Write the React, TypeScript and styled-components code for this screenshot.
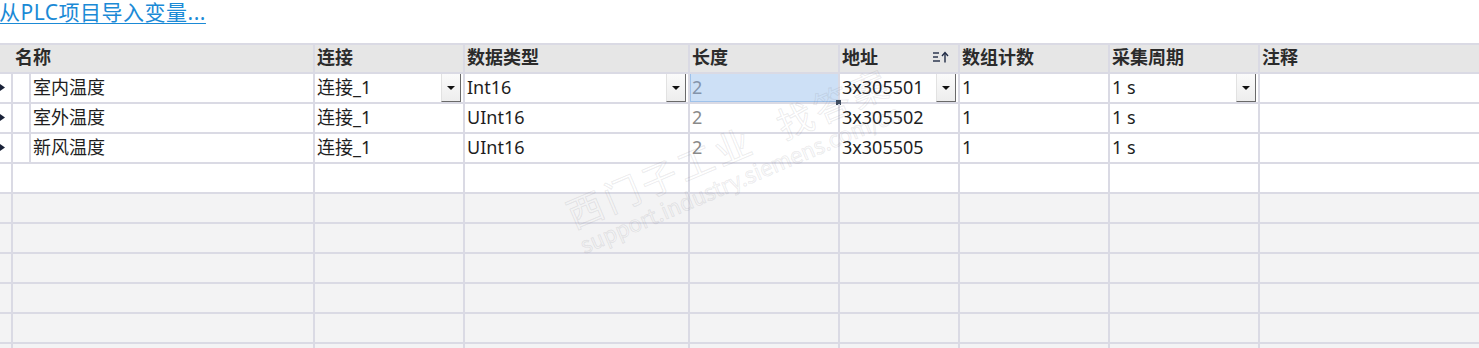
import { createGlobalStyle, styled } from "styled-components";

const GlobalStyle = createGlobalStyle`
  html, body {
    margin: 0;
    padding: 0;
    background: #ffffff;
    overflow: hidden;
  }
  body {
    font-family: "Noto Sans", "Noto Sans CJK SC", sans-serif;
  }
`;

const LINE = "#dadae4";

const Page = styled.div`
  position: relative;
  width: 1479px;
  height: 348px;
  overflow: hidden;
`;

const LinkBar = styled.div`
  height: 43px;
  display: flex;
  align-items: flex-start;
`;

const ImportLink = styled.a`
  margin-left: -1px;
  font-family: "Noto Sans", "Noto Sans CJK SC", sans-serif;
  font-size: 21px;
  letter-spacing: 0.5px;
  line-height: 24px;
  color: #1b8ad6;
  text-decoration: underline;
  text-underline-offset: 3px;
  text-decoration-thickness: 1px;
  cursor: pointer;
`;

const HeaderRow = styled.div`
  display: grid;
  grid-template-columns: 315px 150px 225px 150px 120px 150px 150px 1fr;
  height: 31px;
  box-sizing: border-box;
  background: #e6e6e6;
  border-top: 2px solid ${LINE};
  border-bottom: 2px solid ${LINE};
`;

const HeaderCell = styled.div<{ $first?: boolean }>`
  display: flex;
  align-items: center;
  justify-content: space-between;
  box-sizing: border-box;
  padding-left: ${(p) => (p.$first ? "15px" : "2px")};
  padding-right: 8px;
  padding-bottom: 4px;
  border-right: 2px solid ${LINE};
  font-size: 18px;
  line-height: 20px;
  font-weight: 700;
  color: #2b2b2b;
  white-space: nowrap;
  &:last-child {
    border-right: none;
  }
`;

const Row = styled.div<{ $tone: "white" | "gray" }>`
  display: grid;
  grid-template-columns: 13px 302px 150px 225px 150px 120px 150px 150px 1fr;
  height: 30px;
  box-sizing: border-box;
  background: ${(p) => (p.$tone === "gray" ? "#f3f3f4" : "#ffffff")};
  border-bottom: 2px solid ${LINE};
`;

const Cell = styled.div<{ $muted?: boolean; $selected?: boolean }>`
  position: relative;
  display: flex;
  align-items: center;
  box-sizing: border-box;
  padding-left: 2px;
  border-right: 2px solid ${LINE};
  font-size: 18px;
  line-height: 22px;
  color: ${(p) => (p.$selected ? "#8494ab" : p.$muted ? "#8a8a8a" : "#1e1e1e")};
  background: ${(p) => (p.$selected ? "#cde0f6" : "transparent")};
  box-shadow: ${(p) => (p.$selected ? "inset 1px 0 0 #9fc2ea, inset 0 -1px 0 #9fc2ea" : "none")};
  white-space: nowrap;
  overflow: visible;
  &:last-child {
    border-right: none;
  }
`;

const MarkerCell = styled.div`
  display: flex;
  align-items: center;
  box-sizing: border-box;
  border-right: 2px solid ${LINE};
  overflow: visible;
`;

const NameGutter = styled.div`
  width: 18px;
  align-self: stretch;
  flex-shrink: 0;
  border-right: 2px solid ${LINE};
  box-sizing: border-box;
  margin-left: -2px;
  margin-right: 2px;
`;

const CellText = styled.span`
  flex: 1;
  overflow: hidden;
  padding-bottom: 2px;
`;

const DropButton = styled.div`
  width: 20px;
  height: 100%;
  margin-right: 2px;
  flex-shrink: 0;
  box-sizing: border-box;
  display: flex;
  align-items: center;
  justify-content: center;
  background: linear-gradient(#fbfbfb, #ededed);
  border-left: 1px solid #e2e2e2;
  border-right: 1px solid #6a6a6a;
  border-bottom: 1px solid #6a6a6a;
`;

const DropArrow = styled.span`
  width: 0;
  height: 0;
  border-left: 4px solid transparent;
  border-right: 4px solid transparent;
  border-top: 4px solid #111111;
`;

const Handle = styled.span`
  position: absolute;
  right: -3px;
  bottom: -3px;
  width: 5px;
  height: 5px;
  background: #3b4a5e;
`;

const MarkerArrow = styled.svg`
  display: block;
  flex-shrink: 0;
  width: 8px;
  height: 11px;
  margin-left: -2px;
  margin-bottom: 1px;
`;

const Watermark = styled.div`
  position: absolute;
  left: 560px;
  top: 196px;
  transform: rotate(-23deg);
  transform-origin: 0 0;
  pointer-events: none;
  color: transparent;
  -webkit-text-stroke: 1px rgba(120, 120, 130, 0.15);
  white-space: nowrap;
`;

const WatermarkLine = styled.div<{ $size: number }>`
  font-family: "Noto Sans CJK SC", "Noto Sans", sans-serif;
  font-size: ${(p) => p.$size}px;
  line-height: ${(p) => p.$size + 4}px;
  letter-spacing: ${(p) => (p.$size > 30 ? "4px" : "0")};
`;

const Gap = styled.span`
  display: inline-block;
  width: 28px;
`;

const SortIcon = () => (
  <svg width="18" height="12" viewBox="0 0 18 12">
    <g stroke="#1f2a44" strokeWidth="1.4" fill="none">
      <line x1="1" y1="2" x2="7" y2="2" />
      <line x1="1" y1="6" x2="6" y2="6" />
      <line x1="1" y1="10" x2="8" y2="10" />
      <line x1="13" y1="2" x2="13" y2="11.5" />
      <polyline points="10,5 13,1.5 16,5" />
    </g>
  </svg>
);

const RowMarker = () => (
  <MarkerArrow viewBox="0 0 8 11">
    <polygon points="0,0.5 7,5.5 0,10.5" fill="#1a2238" />
  </MarkerArrow>
);

const Drop = () => (
  <DropButton>
    <DropArrow />
  </DropButton>
);

type Tag = {
  name: string;
  conn: string;
  type: string;
  len: string;
  addr: string;
  count: string;
  cycle: string;
};

const tags: Tag[] = [
  { name: "室内温度", conn: "连接_1", type: "Int16", len: "2", addr: "3x305501", count: "1", cycle: "1 s" },
  { name: "室外温度", conn: "连接_1", type: "UInt16", len: "2", addr: "3x305502", count: "1", cycle: "1 s" },
  { name: "新风温度", conn: "连接_1", type: "UInt16", len: "2", addr: "3x305505", count: "1", cycle: "1 s" },
];

const headers = ["连接", "数据类型", "长度", "地址", "数组计数", "采集周期", "注释"];

const EmptyRow = ({ tone }: { tone: "white" | "gray" }) => (
  <Row $tone={tone}>
    <MarkerCell />
    <Cell />
    <Cell />
    <Cell />
    <Cell />
    <Cell />
    <Cell />
    <Cell />
    <Cell />
  </Row>
);

const App = () => {
  return (
    <Page>
      <GlobalStyle />
      <LinkBar>
        <ImportLink>从PLC项目导入变量...</ImportLink>
      </LinkBar>
      <HeaderRow>
        <HeaderCell $first>名称</HeaderCell>
        {headers.map((h) => (
          <HeaderCell key={h}>
            {h}
            {h === "地址" && <SortIcon />}
          </HeaderCell>
        ))}
      </HeaderRow>
      {tags.map((t, i) => {
        const active = i === 0;
        return (
          <Row $tone="white" key={t.name}>
            <MarkerCell>
              <RowMarker />
            </MarkerCell>
            <Cell>
              <NameGutter />
              <CellText>{t.name}</CellText>
            </Cell>
            <Cell>
              <CellText>{t.conn}</CellText>
              {active && <Drop />}
            </Cell>
            <Cell>
              <CellText>{t.type}</CellText>
              {active && <Drop />}
            </Cell>
            <Cell $muted $selected={active}>
              <CellText>{t.len}</CellText>
              {active && <Handle />}
            </Cell>
            <Cell>
              <CellText>{t.addr}</CellText>
              {active && <Drop />}
            </Cell>
            <Cell>
              <CellText>{t.count}</CellText>
            </Cell>
            <Cell>
              <CellText>{t.cycle}</CellText>
              {active && <Drop />}
            </Cell>
            <Cell />
          </Row>
        );
      })}
      <EmptyRow tone="white" />
      <EmptyRow tone="gray" />
      <EmptyRow tone="gray" />
      <EmptyRow tone="gray" />
      <EmptyRow tone="gray" />
      <EmptyRow tone="gray" />
      <EmptyRow tone="gray" />
      <Watermark>
        <WatermarkLine $size={36}>
          西门子工业<Gap />找答案
        </WatermarkLine>
        <WatermarkLine $size={22}>support.industry.siemens.com/cn</WatermarkLine>
      </Watermark>
    </Page>
  );
};

export default App;
